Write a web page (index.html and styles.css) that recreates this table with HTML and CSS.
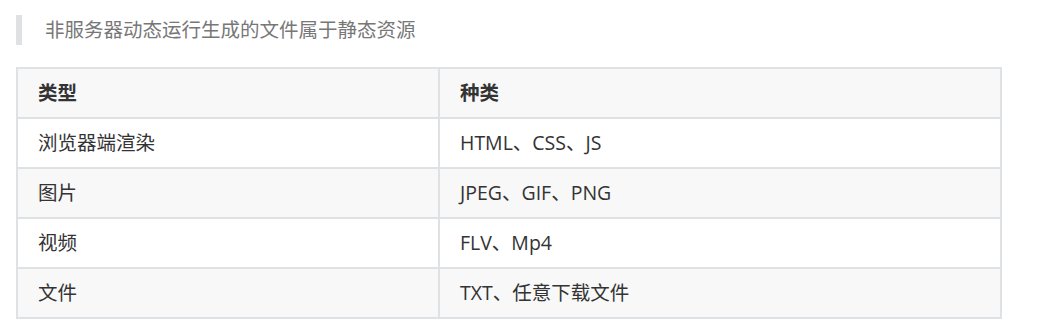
FILE: index.html
```html
<!DOCTYPE html>
<html lang="zh-CN">
<head>
<meta charset="utf-8">
<link rel="stylesheet" href="styles.css">
</head>
<body>
<div class="doc">
  <blockquote class="quote">非服务器动态运行生成的文件属于静态资源</blockquote>
  <table class="tbl">
    <colgroup><col class="c1"><col class="c2"></colgroup>
    <thead>
      <tr><th>类型</th><th>种类</th></tr>
    </thead>
    <tbody>
      <tr><td>浏览器端渲染</td><td>HTML、CSS、JS</td></tr>
      <tr><td>图片</td><td>JPEG、GIF、PNG</td></tr>
      <tr><td>视频</td><td>FLV、Mp4</td></tr>
      <tr><td>文件</td><td>TXT、任意下载文件</td></tr>
    </tbody>
  </table>
</div>
</body>
</html>
```
FILE: styles.css
```css
html, body { margin: 0; padding: 0; background: #fff; }
body {
  font-family: "Open Sans", "Noto Sans CJK SC", sans-serif;
  font-size: 19.5px;
  color: #333;
}
.doc {
  width: 986px;
  padding: 15px 0 0 16px;
}
.quote {
  margin: 0;
  height: 30px;
  line-height: 30px;
  border-left: 6px solid #dfe2e5;
  padding-left: 23px;
  color: #777;
  font-size: 19.5px;
}
.tbl {
  margin-top: 22px;
  width: 986px;
  border-collapse: collapse;
}
.c1 { width: 422px; }
.tbl th, .tbl td {
  border: 2px solid #dfe2e5;
  height: 48px;
  padding: 0 20px;
  text-align: left;
  vertical-align: middle;
  line-height: 26px;
}
.tbl th { font-weight: bold; background: #f8f8f8; }
.tbl tbody tr:nth-child(even) td { background: #f8f8f8; }
```
